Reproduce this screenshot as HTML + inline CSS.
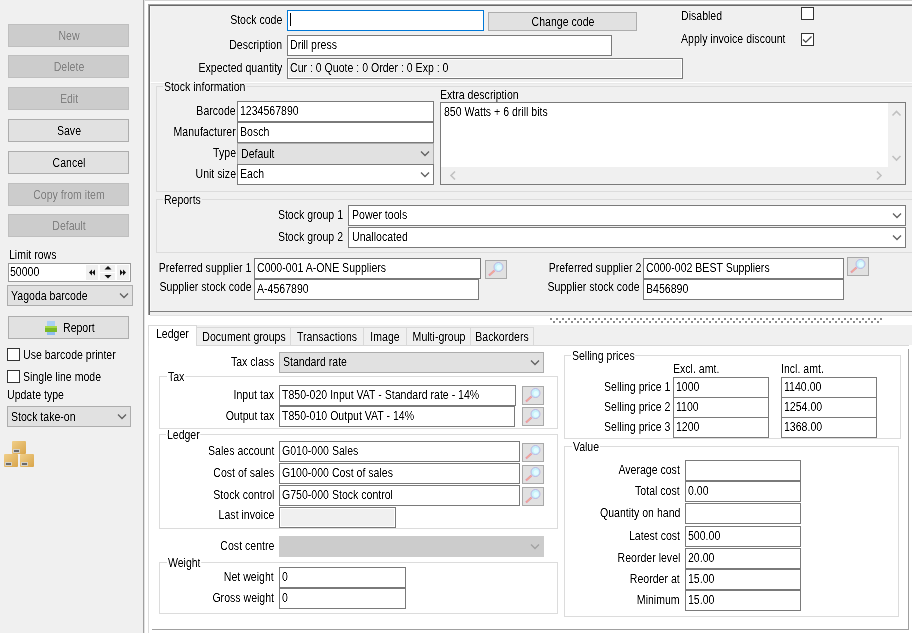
<!DOCTYPE html><html><head><meta charset="utf-8"><style>
html,body{margin:0;padding:0;width:912px;height:633px;overflow:hidden;background:#f0f0f0}
.a{position:absolute}
.t{position:absolute;white-space:nowrap;font-family:"Liberation Sans",sans-serif;font-size:12px;line-height:13px;color:#000;transform:scaleX(0.88)}
</style></head><body>
<div class="a" style="left:8px;top:24px;width:121px;height:23px;border:1px solid #bfbfbf;width:119px;height:21px;background:#cccccc;"></div>
<div class="a" style="left:8px;top:55px;width:121px;height:23px;border:1px solid #bfbfbf;width:119px;height:21px;background:#cccccc;"></div>
<div class="a" style="left:8px;top:87px;width:121px;height:23px;border:1px solid #bfbfbf;width:119px;height:21px;background:#cccccc;"></div>
<div class="a" style="left:8px;top:119px;width:121px;height:23px;border:1px solid #adadad;width:119px;height:21px;background:#e1e1e1;"></div>
<div class="a" style="left:8px;top:151px;width:121px;height:23px;border:1px solid #adadad;width:119px;height:21px;background:#e1e1e1;"></div>
<div class="a" style="left:8px;top:183px;width:121px;height:23px;border:1px solid #bfbfbf;width:119px;height:21px;background:#cccccc;"></div>
<div class="a" style="left:8px;top:214px;width:121px;height:23px;border:1px solid #bfbfbf;width:119px;height:21px;background:#cccccc;"></div>
<div class="a" style="left:8px;top:263px;width:123px;height:19px;border:1px solid #9a9a9a;width:121px;height:17px;background:#fff;"></div>
<div class="a" style="left:86px;top:265px;width:12px;height:15px;background:#f0f0f0;"></div>
<div class="a" style="left:100px;top:265px;width:15px;height:7px;background:#f0f0f0;"></div>
<div class="a" style="left:100px;top:273px;width:15px;height:7px;background:#f0f0f0;"></div>
<div class="a" style="left:117px;top:265px;width:12px;height:15px;background:#f0f0f0;"></div>
<svg class="a" style="left:86px;top:265px" width="43" height="15">
<path d="M3 7.5 L6 4.5 L6 10.5 Z M6 7.5 L9 4.5 L9 10.5 Z" fill="#111"/>
<path d="M18.5 4.5 L22 1 L25.5 4.5 Z" fill="#111"/>
<path d="M18.5 10 L22 13.5 L25.5 10 Z" fill="#111"/>
<path d="M34 4.5 L37 7.5 L34 10.5 Z M37 4.5 L40 7.5 L37 10.5 Z" fill="#111"/>
</svg>
<div class="a" style="left:7px;top:285px;width:126px;height:21px;border:1px solid #adadad;width:124px;height:19px;background:#e1e1e1;"></div>
<svg class="a" style="left:119px;top:292px" width="11" height="7"><path d="M1 1.5 L5 5.5 L9 1.5" fill="none" stroke="#606060" stroke-width="1.3"/></svg>
<div class="a" style="left:8px;top:316px;width:121px;height:23px;border:1px solid #adadad;width:119px;height:21px;background:#e1e1e1;"></div>
<svg class="a" style="left:44px;top:320px" width="15" height="16">
<rect x="3" y="1" width="8" height="6" fill="#a9d0f5"/>
<rect x="0.5" y="6" width="13" height="6" fill="#e8e8e8"/>
<rect x="1" y="6" width="12" height="6" fill="#7ab82a"/>
<rect x="1" y="6" width="12" height="2" fill="#a8d84a"/>
<rect x="3" y="12" width="8" height="3" fill="#8fbdf0"/>
</svg>
<div class="a" style="left:7px;top:348px;width:13px;height:13px;border:1px solid #333333;width:11px;height:11px;background:#fff;"></div>
<div class="a" style="left:7px;top:370px;width:13px;height:13px;border:1px solid #333333;width:11px;height:11px;background:#fff;"></div>
<div class="a" style="left:7px;top:406px;width:124px;height:21px;border:1px solid #adadad;width:122px;height:19px;background:#e1e1e1;"></div>
<svg class="a" style="left:117px;top:413px" width="11" height="7"><path d="M1 1.5 L5 5.5 L9 1.5" fill="none" stroke="#606060" stroke-width="1.3"/></svg>
<svg class="a" style="left:3px;top:440px" width="33" height="29">
<defs><linearGradient id="bx" x1="0" y1="0" x2="1" y2="1"><stop offset="0" stop-color="#f0cf8a"/><stop offset="1" stop-color="#d9a54a"/></linearGradient></defs>
<rect x="9" y="1" width="14" height="13" rx="1" fill="url(#bx)"/>
<rect x="1" y="14" width="14" height="13" rx="1" fill="url(#bx)"/>
<rect x="17" y="14" width="14" height="13" rx="1" fill="url(#bx)"/>
<rect x="10" y="9" width="7" height="4" fill="#d6d0c4"/><rect x="11" y="10" width="5" height="2" fill="#6a6a6a"/>
<rect x="2" y="22" width="7" height="4" fill="#d6d0c4"/><rect x="3" y="23" width="5" height="2" fill="#6a6a6a"/>
<rect x="18" y="22" width="7" height="4" fill="#d6d0c4"/><rect x="19" y="23" width="5" height="2" fill="#6a6a6a"/>
</svg>
<div class="a" style="left:143px;top:0px;width:1px;height:633px;background:#a0a0a0;"></div>
<div class="a" style="left:144px;top:0px;width:768px;height:633px;background:#ffffff;"></div>
<div class="a" style="left:144px;top:0px;width:768px;height:1px;background:#d5d5d5;"></div>
<div class="a" style="left:144px;top:0px;width:1px;height:633px;background:#e3e3e3;"></div>
<div class="a" style="left:148px;top:4px;width:764px;height:311px;background:#f0f0f0;"></div>
<div class="a" style="left:148px;top:4px;width:764px;height:1px;background:#a0a0a0;"></div>
<div class="a" style="left:148px;top:4px;width:1px;height:311px;background:#a0a0a0;"></div>
<div class="a" style="left:149px;top:5px;width:763px;height:1px;background:#696969;"></div>
<div class="a" style="left:149px;top:5px;width:1px;height:310px;background:#696969;"></div>
<div class="a" style="left:150px;top:6px;width:1px;height:305px;background:#f8f8f8;"></div>
<div class="a" style="left:150px;top:82px;width:762px;height:1px;background:#ffffff;"></div>
<div class="a" style="left:151px;top:83px;width:761px;height:1px;background:#e8e8e8;"></div>
<div class="a" style="left:150px;top:311px;width:762px;height:1px;background:#808080;"></div>
<div class="a" style="left:150px;top:315px;width:762px;height:1px;background:#e3e3e3;"></div>
<div class="a" style="left:287px;top:10px;width:197px;height:21px;border:1px solid #0078d7;width:195px;height:19px;background:#fff;"></div>
<div class="a" style="left:290px;top:13px;width:1px;height:13px;background:#000;"></div>
<div class="a" style="left:488px;top:12px;width:149px;height:19px;border:1px solid #adadad;width:147px;height:17px;background:#e1e1e1;"></div>
<div class="a" style="left:287px;top:35px;width:325px;height:21px;border:1px solid #7a7a7a;width:323px;height:19px;background:#fff;"></div>
<div class="a" style="left:287px;top:58px;width:396px;height:21px;border:1px solid #7a7a7a;width:394px;height:19px;background:#f0f0f0;box-shadow:inset 0 0 0 1px #fff;"></div>
<div class="a" style="left:801px;top:7px;width:13px;height:13px;border:1px solid #333333;width:11px;height:11px;background:#fff;"></div>
<div class="a" style="left:801px;top:33px;width:13px;height:13px;border:1px solid #333333;width:11px;height:11px;background:#fff;"></div>
<svg class="a" style="left:801px;top:33px" width="13" height="13"><path d="M2 6.5 L4.8 9.2 L10.5 3.5" fill="none" stroke="#444" stroke-width="1.2"/></svg>
<div class="a" style="left:156px;top:86px;width:760px;height:106px;border:1px solid #dcdcdc;width:758px;height:104px;"></div>
<div class="a" style="left:237px;top:101px;width:197px;height:21px;border:1px solid #7a7a7a;width:195px;height:19px;background:#fff;"></div>
<div class="a" style="left:237px;top:122px;width:197px;height:21px;border:1px solid #7a7a7a;width:195px;height:19px;background:#fff;"></div>
<div class="a" style="left:237px;top:143px;width:197px;height:22px;border:1px solid #adadad;width:195px;height:20px;background:#e1e1e1;"></div>
<svg class="a" style="left:420px;top:150px" width="11" height="7"><path d="M1 1.5 L5 5.5 L9 1.5" fill="none" stroke="#606060" stroke-width="1.3"/></svg>
<div class="a" style="left:237px;top:164px;width:197px;height:21px;border:1px solid #7a7a7a;width:195px;height:19px;background:#fff;"></div>
<svg class="a" style="left:420px;top:171px" width="11" height="7"><path d="M1 1.5 L5 5.5 L9 1.5" fill="none" stroke="#606060" stroke-width="1.3"/></svg>
<div class="a" style="left:440px;top:102px;width:466px;height:83px;border:1px solid #7a7a7a;width:464px;height:81px;background:#fff;"></div>
<div class="a" style="left:888px;top:103px;width:17px;height:65px;background:#f0f0f0;"></div>
<div class="a" style="left:441px;top:167px;width:464px;height:17px;background:#f0f0f0;"></div>
<svg class="a" style="left:890px;top:110px" width="13" height="50"></svg>
<svg class="a" style="left:888px;top:102px" width="17" height="82">
<path d="M4.5 13.5 L8.5 9.5 L12.5 13.5" fill="none" stroke="#c0c0c0" stroke-width="1.6"/>
<path d="M4.5 54 L8.5 58 L12.5 54" fill="none" stroke="#c0c0c0" stroke-width="1.6"/>
</svg>
<svg class="a" style="left:441px;top:167px" width="464" height="17">
<path d="M14 4.5 L10 8.5 L14 12.5" fill="none" stroke="#c0c0c0" stroke-width="1.6"/>
<path d="M436 4.5 L440 8.5 L436 12.5" fill="none" stroke="#c0c0c0" stroke-width="1.6"/>
</svg>
<div class="a" style="left:156px;top:199px;width:760px;height:54px;border:1px solid #dcdcdc;width:758px;height:52px;"></div>
<div class="a" style="left:348px;top:205px;width:558px;height:21px;border:1px solid #7a7a7a;width:556px;height:19px;background:#fff;"></div>
<svg class="a" style="left:892px;top:212px" width="11" height="7"><path d="M1 1.5 L5 5.5 L9 1.5" fill="none" stroke="#606060" stroke-width="1.3"/></svg>
<div class="a" style="left:348px;top:227px;width:558px;height:21px;border:1px solid #7a7a7a;width:556px;height:19px;background:#fff;"></div>
<svg class="a" style="left:892px;top:234px" width="11" height="7"><path d="M1 1.5 L5 5.5 L9 1.5" fill="none" stroke="#606060" stroke-width="1.3"/></svg>
<div class="a" style="left:254px;top:258px;width:227px;height:21px;border:1px solid #7a7a7a;width:225px;height:19px;background:#fff;"></div>
<div class="a" style="left:485px;top:260px;width:22px;height:19px;border:1px solid #a9a9a9;width:20px;height:17px;background:#e1e1e1;"></div>
<svg class="a" style="left:485px;top:260px" width="22" height="19">
<line x1="4" y1="15.5" x2="9.5" y2="10.5" stroke="#e58fb0" stroke-width="2.2"/>
<line x1="4.5" y1="15" x2="9" y2="11" stroke="#f7c27a" stroke-width="0.9"/>
<circle cx="13.5" cy="7" r="4.5" fill="#c8f2fb" stroke="#b4a8e0" stroke-width="0.8"/>
<circle cx="14" cy="7.5" r="2.5" fill="#e4fcff"/>
</svg>
<div class="a" style="left:254px;top:279px;width:225px;height:21px;border:1px solid #7a7a7a;width:223px;height:19px;background:#fff;"></div>
<div class="a" style="left:643px;top:258px;width:201px;height:21px;border:1px solid #7a7a7a;width:199px;height:19px;background:#fff;"></div>
<div class="a" style="left:847px;top:257px;width:22px;height:19px;border:1px solid #a9a9a9;width:20px;height:17px;background:#e1e1e1;"></div>
<svg class="a" style="left:847px;top:257px" width="22" height="19">
<line x1="4" y1="15.5" x2="9.5" y2="10.5" stroke="#e58fb0" stroke-width="2.2"/>
<line x1="4.5" y1="15" x2="9" y2="11" stroke="#f7c27a" stroke-width="0.9"/>
<circle cx="13.5" cy="7" r="4.5" fill="#c8f2fb" stroke="#b4a8e0" stroke-width="0.8"/>
<circle cx="14" cy="7.5" r="2.5" fill="#e4fcff"/>
</svg>
<div class="a" style="left:643px;top:279px;width:201px;height:21px;border:1px solid #7a7a7a;width:199px;height:19px;background:#fff;"></div>
<svg class="a" style="left:550px;top:318px" width="335" height="5" fill="#8a8a8a"><rect x="0" y="0" width="2" height="2"/><rect x="3" y="3" width="2" height="2"/><rect x="6" y="0" width="2" height="2"/><rect x="9" y="3" width="2" height="2"/><rect x="12" y="0" width="2" height="2"/><rect x="15" y="3" width="2" height="2"/><rect x="18" y="0" width="2" height="2"/><rect x="21" y="3" width="2" height="2"/><rect x="24" y="0" width="2" height="2"/><rect x="27" y="3" width="2" height="2"/><rect x="30" y="0" width="2" height="2"/><rect x="33" y="3" width="2" height="2"/><rect x="36" y="0" width="2" height="2"/><rect x="39" y="3" width="2" height="2"/><rect x="42" y="0" width="2" height="2"/><rect x="45" y="3" width="2" height="2"/><rect x="48" y="0" width="2" height="2"/><rect x="51" y="3" width="2" height="2"/><rect x="54" y="0" width="2" height="2"/><rect x="57" y="3" width="2" height="2"/><rect x="60" y="0" width="2" height="2"/><rect x="63" y="3" width="2" height="2"/><rect x="66" y="0" width="2" height="2"/><rect x="69" y="3" width="2" height="2"/><rect x="72" y="0" width="2" height="2"/><rect x="75" y="3" width="2" height="2"/><rect x="78" y="0" width="2" height="2"/><rect x="81" y="3" width="2" height="2"/><rect x="84" y="0" width="2" height="2"/><rect x="87" y="3" width="2" height="2"/><rect x="90" y="0" width="2" height="2"/><rect x="93" y="3" width="2" height="2"/><rect x="96" y="0" width="2" height="2"/><rect x="99" y="3" width="2" height="2"/><rect x="102" y="0" width="2" height="2"/><rect x="105" y="3" width="2" height="2"/><rect x="108" y="0" width="2" height="2"/><rect x="111" y="3" width="2" height="2"/><rect x="114" y="0" width="2" height="2"/><rect x="117" y="3" width="2" height="2"/><rect x="120" y="0" width="2" height="2"/><rect x="123" y="3" width="2" height="2"/><rect x="126" y="0" width="2" height="2"/><rect x="129" y="3" width="2" height="2"/><rect x="132" y="0" width="2" height="2"/><rect x="135" y="3" width="2" height="2"/><rect x="138" y="0" width="2" height="2"/><rect x="141" y="3" width="2" height="2"/><rect x="144" y="0" width="2" height="2"/><rect x="147" y="3" width="2" height="2"/><rect x="150" y="0" width="2" height="2"/><rect x="153" y="3" width="2" height="2"/><rect x="156" y="0" width="2" height="2"/><rect x="159" y="3" width="2" height="2"/><rect x="162" y="0" width="2" height="2"/><rect x="165" y="3" width="2" height="2"/><rect x="168" y="0" width="2" height="2"/><rect x="171" y="3" width="2" height="2"/><rect x="174" y="0" width="2" height="2"/><rect x="177" y="3" width="2" height="2"/><rect x="180" y="0" width="2" height="2"/><rect x="183" y="3" width="2" height="2"/><rect x="186" y="0" width="2" height="2"/><rect x="189" y="3" width="2" height="2"/><rect x="192" y="0" width="2" height="2"/><rect x="195" y="3" width="2" height="2"/><rect x="198" y="0" width="2" height="2"/><rect x="201" y="3" width="2" height="2"/><rect x="204" y="0" width="2" height="2"/><rect x="207" y="3" width="2" height="2"/><rect x="210" y="0" width="2" height="2"/><rect x="213" y="3" width="2" height="2"/><rect x="216" y="0" width="2" height="2"/><rect x="219" y="3" width="2" height="2"/><rect x="222" y="0" width="2" height="2"/><rect x="225" y="3" width="2" height="2"/><rect x="228" y="0" width="2" height="2"/><rect x="231" y="3" width="2" height="2"/><rect x="234" y="0" width="2" height="2"/><rect x="237" y="3" width="2" height="2"/><rect x="240" y="0" width="2" height="2"/><rect x="243" y="3" width="2" height="2"/><rect x="246" y="0" width="2" height="2"/><rect x="249" y="3" width="2" height="2"/><rect x="252" y="0" width="2" height="2"/><rect x="255" y="3" width="2" height="2"/><rect x="258" y="0" width="2" height="2"/><rect x="261" y="3" width="2" height="2"/><rect x="264" y="0" width="2" height="2"/><rect x="267" y="3" width="2" height="2"/><rect x="270" y="0" width="2" height="2"/><rect x="273" y="3" width="2" height="2"/><rect x="276" y="0" width="2" height="2"/><rect x="279" y="3" width="2" height="2"/><rect x="282" y="0" width="2" height="2"/><rect x="285" y="3" width="2" height="2"/><rect x="288" y="0" width="2" height="2"/><rect x="291" y="3" width="2" height="2"/><rect x="294" y="0" width="2" height="2"/><rect x="297" y="3" width="2" height="2"/><rect x="300" y="0" width="2" height="2"/><rect x="303" y="3" width="2" height="2"/><rect x="306" y="0" width="2" height="2"/><rect x="309" y="3" width="2" height="2"/><rect x="312" y="0" width="2" height="2"/><rect x="315" y="3" width="2" height="2"/><rect x="318" y="0" width="2" height="2"/><rect x="321" y="3" width="2" height="2"/><rect x="324" y="0" width="2" height="2"/><rect x="327" y="3" width="2" height="2"/><rect x="330" y="0" width="2" height="2"/></svg>
<div class="a" style="left:148px;top:325px;width:764px;height:21px;background:#f0f0f0;"></div>
<div class="a" style="left:148px;top:345px;width:764px;height:288px;background:#ffffff;"></div>
<div class="a" style="left:148px;top:345px;width:761px;height:1px;background:#d9d9d9;"></div>
<div class="a" style="left:148px;top:345px;width:1px;height:288px;background:#dcdcdc;"></div>
<div class="a" style="left:908px;top:349px;width:1px;height:281px;background:#a0a0a0;"></div>
<div class="a" style="left:152px;top:629px;width:757px;height:1px;background:#a0a0a0;"></div>
<div class="a" style="left:196px;top:327px;width:95px;height:19px;border:1px solid #d9d9d9;width:93px;height:17px;background:#f0f0f0;"></div>
<div class="a" style="left:290px;top:327px;width:74px;height:19px;border:1px solid #d9d9d9;width:72px;height:17px;background:#f0f0f0;"></div>
<div class="a" style="left:363px;top:327px;width:44px;height:19px;border:1px solid #d9d9d9;width:42px;height:17px;background:#f0f0f0;"></div>
<div class="a" style="left:406px;top:327px;width:65px;height:19px;border:1px solid #d9d9d9;width:63px;height:17px;background:#f0f0f0;"></div>
<div class="a" style="left:470px;top:327px;width:64px;height:19px;border:1px solid #d9d9d9;width:62px;height:17px;background:#f0f0f0;"></div>
<div class="a" style="left:148px;top:325px;width:49px;height:21px;border:1px solid #d9d9d9;width:47px;height:19px;background:#ffffff;"></div>
<div class="a" style="left:149px;top:344px;width:47px;height:3px;background:#ffffff;"></div>
<div class="a" style="left:279px;top:352px;width:265px;height:21px;border:1px solid #adadad;width:263px;height:19px;background:#e1e1e1;"></div>
<svg class="a" style="left:530px;top:359px" width="11" height="7"><path d="M1 1.5 L5 5.5 L9 1.5" fill="none" stroke="#606060" stroke-width="1.3"/></svg>
<div class="a" style="left:159px;top:376px;width:399px;height:53px;border:1px solid #dcdcdc;width:397px;height:51px;"></div>
<div class="a" style="left:279px;top:385px;width:237px;height:21px;border:1px solid #7a7a7a;width:235px;height:19px;background:#fff;"></div>
<div class="a" style="left:522px;top:386px;width:22px;height:19px;border:1px solid #a9a9a9;width:20px;height:17px;background:#e1e1e1;"></div>
<svg class="a" style="left:522px;top:386px" width="22" height="19">
<line x1="4" y1="15.5" x2="9.5" y2="10.5" stroke="#e58fb0" stroke-width="2.2"/>
<line x1="4.5" y1="15" x2="9" y2="11" stroke="#f7c27a" stroke-width="0.9"/>
<circle cx="13.5" cy="7" r="4.5" fill="#c8f2fb" stroke="#b4a8e0" stroke-width="0.8"/>
<circle cx="14" cy="7.5" r="2.5" fill="#e4fcff"/>
</svg>
<div class="a" style="left:279px;top:406px;width:236px;height:21px;border:1px solid #7a7a7a;width:234px;height:19px;background:#fff;"></div>
<div class="a" style="left:522px;top:407px;width:22px;height:19px;border:1px solid #a9a9a9;width:20px;height:17px;background:#e1e1e1;"></div>
<svg class="a" style="left:522px;top:407px" width="22" height="19">
<line x1="4" y1="15.5" x2="9.5" y2="10.5" stroke="#e58fb0" stroke-width="2.2"/>
<line x1="4.5" y1="15" x2="9" y2="11" stroke="#f7c27a" stroke-width="0.9"/>
<circle cx="13.5" cy="7" r="4.5" fill="#c8f2fb" stroke="#b4a8e0" stroke-width="0.8"/>
<circle cx="14" cy="7.5" r="2.5" fill="#e4fcff"/>
</svg>
<div class="a" style="left:159px;top:434px;width:399px;height:95px;border:1px solid #dcdcdc;width:397px;height:93px;"></div>
<div class="a" style="left:279px;top:441px;width:241px;height:21px;border:1px solid #7a7a7a;width:239px;height:19px;background:#fff;"></div>
<div class="a" style="left:522px;top:443px;width:22px;height:19px;border:1px solid #a9a9a9;width:20px;height:17px;background:#e1e1e1;"></div>
<svg class="a" style="left:522px;top:443px" width="22" height="19">
<line x1="4" y1="15.5" x2="9.5" y2="10.5" stroke="#e58fb0" stroke-width="2.2"/>
<line x1="4.5" y1="15" x2="9" y2="11" stroke="#f7c27a" stroke-width="0.9"/>
<circle cx="13.5" cy="7" r="4.5" fill="#c8f2fb" stroke="#b4a8e0" stroke-width="0.8"/>
<circle cx="14" cy="7.5" r="2.5" fill="#e4fcff"/>
</svg>
<div class="a" style="left:279px;top:463px;width:241px;height:21px;border:1px solid #7a7a7a;width:239px;height:19px;background:#fff;"></div>
<div class="a" style="left:522px;top:465px;width:22px;height:19px;border:1px solid #a9a9a9;width:20px;height:17px;background:#e1e1e1;"></div>
<svg class="a" style="left:522px;top:465px" width="22" height="19">
<line x1="4" y1="15.5" x2="9.5" y2="10.5" stroke="#e58fb0" stroke-width="2.2"/>
<line x1="4.5" y1="15" x2="9" y2="11" stroke="#f7c27a" stroke-width="0.9"/>
<circle cx="13.5" cy="7" r="4.5" fill="#c8f2fb" stroke="#b4a8e0" stroke-width="0.8"/>
<circle cx="14" cy="7.5" r="2.5" fill="#e4fcff"/>
</svg>
<div class="a" style="left:279px;top:485px;width:241px;height:21px;border:1px solid #7a7a7a;width:239px;height:19px;background:#fff;"></div>
<div class="a" style="left:522px;top:487px;width:22px;height:19px;border:1px solid #a9a9a9;width:20px;height:17px;background:#e1e1e1;"></div>
<svg class="a" style="left:522px;top:487px" width="22" height="19">
<line x1="4" y1="15.5" x2="9.5" y2="10.5" stroke="#e58fb0" stroke-width="2.2"/>
<line x1="4.5" y1="15" x2="9" y2="11" stroke="#f7c27a" stroke-width="0.9"/>
<circle cx="13.5" cy="7" r="4.5" fill="#c8f2fb" stroke="#b4a8e0" stroke-width="0.8"/>
<circle cx="14" cy="7.5" r="2.5" fill="#e4fcff"/>
</svg>
<div class="a" style="left:279px;top:507px;width:117px;height:21px;border:1px solid #7a7a7a;width:115px;height:19px;background:#f0f0f0;box-shadow:inset 0 0 0 1px #fff;"></div>
<div class="a" style="left:279px;top:536px;width:265px;height:21px;border:1px solid #cccccc;width:263px;height:19px;background:#cccccc;"></div>
<svg class="a" style="left:530px;top:543px" width="11" height="7"><path d="M1 1.5 L5 5.5 L9 1.5" fill="none" stroke="#a0a0a0" stroke-width="1.3"/></svg>
<div class="a" style="left:159px;top:562px;width:399px;height:52px;border:1px solid #dcdcdc;width:397px;height:50px;"></div>
<div class="a" style="left:279px;top:567px;width:127px;height:21px;border:1px solid #7a7a7a;width:125px;height:19px;background:#fff;"></div>
<div class="a" style="left:279px;top:588px;width:127px;height:21px;border:1px solid #7a7a7a;width:125px;height:19px;background:#fff;"></div>
<div class="a" style="left:564px;top:355px;width:337px;height:84px;border:1px solid #dcdcdc;width:335px;height:82px;"></div>
<div class="a" style="left:673px;top:377px;width:96px;height:21px;border:1px solid #7a7a7a;width:94px;height:19px;background:#fff;"></div>
<div class="a" style="left:781px;top:377px;width:96px;height:21px;border:1px solid #7a7a7a;width:94px;height:19px;background:#fff;"></div>
<div class="a" style="left:673px;top:397px;width:96px;height:21px;border:1px solid #7a7a7a;width:94px;height:19px;background:#fff;"></div>
<div class="a" style="left:781px;top:397px;width:96px;height:21px;border:1px solid #7a7a7a;width:94px;height:19px;background:#fff;"></div>
<div class="a" style="left:673px;top:417px;width:96px;height:21px;border:1px solid #7a7a7a;width:94px;height:19px;background:#fff;"></div>
<div class="a" style="left:781px;top:417px;width:96px;height:21px;border:1px solid #7a7a7a;width:94px;height:19px;background:#fff;"></div>
<div class="a" style="left:564px;top:446px;width:335px;height:171px;border:1px solid #dcdcdc;width:333px;height:169px;"></div>
<div class="a" style="left:685px;top:460px;width:116px;height:21px;border:1px solid #7a7a7a;width:114px;height:19px;background:#fff;"></div>
<div class="a" style="left:685px;top:481px;width:116px;height:21px;border:1px solid #7a7a7a;width:114px;height:19px;background:#fff;"></div>
<div class="a" style="left:685px;top:503px;width:116px;height:21px;border:1px solid #7a7a7a;width:114px;height:19px;background:#fff;"></div>
<div class="a" style="left:685px;top:526px;width:116px;height:21px;border:1px solid #7a7a7a;width:114px;height:19px;background:#fff;"></div>
<div class="a" style="left:685px;top:548px;width:116px;height:21px;border:1px solid #7a7a7a;width:114px;height:19px;background:#fff;"></div>
<div class="a" style="left:685px;top:569px;width:116px;height:21px;border:1px solid #7a7a7a;width:114px;height:19px;background:#fff;"></div>
<div class="a" style="left:685px;top:590px;width:116px;height:21px;border:1px solid #7a7a7a;width:114px;height:19px;background:#fff;"></div>
<svg width="0" height="0" style="position:absolute"><filter id="crisp" x="0" y="0" width="100%" height="100%"><feComponentTransfer><feFuncA type="linear" slope="1.6" intercept="-0.3"/></feComponentTransfer></filter></svg>
<div class="a" style="left:0;top:0;width:912px;height:633px;filter:url(#crisp)">
<div class="t" style="left:-81.5px;width:300px;top:30px;color:#838383;text-align:center;transform-origin:50% 0;">New</div>
<div class="t" style="left:-81.5px;width:300px;top:61px;color:#838383;text-align:center;transform-origin:50% 0;">Delete</div>
<div class="t" style="left:-81.5px;width:300px;top:93px;color:#838383;text-align:center;transform-origin:50% 0;">Edit</div>
<div class="t" style="left:-81.5px;width:300px;top:125px;color:#000;text-align:center;transform-origin:50% 0;">Save</div>
<div class="t" style="left:-81.5px;width:300px;top:157px;color:#000;text-align:center;transform-origin:50% 0;">Cancel</div>
<div class="t" style="left:-81.5px;width:300px;top:189px;color:#838383;text-align:center;transform-origin:50% 0;">Copy from item</div>
<div class="t" style="left:-81.5px;width:300px;top:220px;color:#838383;text-align:center;transform-origin:50% 0;">Default</div>
<div class="t" style="left:9px;top:249px;color:#000;transform-origin:0 0;">Limit rows</div>
<div class="t" style="left:10px;top:266px;color:#000;transform-origin:0 0;">50000</div>
<div class="t" style="left:11px;top:290px;color:#000;transform-origin:0 0;">Yagoda barcode</div>
<div class="t" style="left:-81.5px;width:300px;top:322px;color:#000;text-align:center;transform-origin:50% 0;"></div>
<div class="t" style="left:63px;top:322px;color:#000;transform-origin:0 0;">Report</div>
<div class="t" style="left:23px;top:349px;color:#000;transform-origin:0 0;">Use barcode printer</div>
<div class="t" style="left:23px;top:371px;color:#000;transform-origin:0 0;">Single line mode</div>
<div class="t" style="left:7px;top:389px;color:#000;transform-origin:0 0;">Update type</div>
<div class="t" style="left:11px;top:411px;color:#000;transform-origin:0 0;">Stock take-on</div>
<div class="t" style="right:630px;top:14px;color:#000;text-align:right;transform-origin:100% 0;">Stock code</div>
<div class="t" style="left:412.5px;width:300px;top:16px;color:#000;text-align:center;transform-origin:50% 0;">Change code</div>
<div class="t" style="right:630px;top:39px;color:#000;text-align:right;transform-origin:100% 0;">Description</div>
<div class="t" style="left:290px;top:39px;color:#000;transform-origin:0 0;">Drill press</div>
<div class="t" style="right:630px;top:62px;color:#000;text-align:right;transform-origin:100% 0;">Expected quantity</div>
<div class="t" style="left:290px;top:62px;color:#000;transform-origin:0 0;">Cur : 0 Quote : 0 Order : 0 Exp : 0</div>
<div class="t" style="left:681px;top:10px;color:#000;transform-origin:0 0;">Disabled</div>
<div class="t" style="left:681px;top:33px;color:#000;transform-origin:0 0;">Apply invoice discount</div>
<div class="t" style="left:163px;top:81px;background:linear-gradient(transparent 4px,#f0f0f0 4px,#f0f0f0 7px,transparent 7px);padding:0 1px;transform-origin:0 0">Stock information</div>
<div class="t" style="right:676px;top:105px;color:#000;text-align:right;transform-origin:100% 0;">Barcode</div>
<div class="t" style="left:240px;top:105px;color:#000;transform-origin:0 0;">1234567890</div>
<div class="t" style="right:676px;top:126px;color:#000;text-align:right;transform-origin:100% 0;">Manufacturer</div>
<div class="t" style="left:240px;top:126px;color:#000;transform-origin:0 0;">Bosch</div>
<div class="t" style="right:676px;top:147px;color:#000;text-align:right;transform-origin:100% 0;">Type</div>
<div class="t" style="left:241px;top:148px;color:#000;transform-origin:0 0;">Default</div>
<div class="t" style="right:676px;top:168px;color:#000;text-align:right;transform-origin:100% 0;">Unit size</div>
<div class="t" style="left:240px;top:168px;color:#000;transform-origin:0 0;">Each</div>
<div class="t" style="left:440px;top:89px;color:#000;transform-origin:0 0;">Extra description</div>
<div class="t" style="left:444px;top:106px;color:#000;transform-origin:0 0;">850 Watts + 6 drill bits</div>
<div class="t" style="left:163px;top:194px;background:linear-gradient(transparent 4px,#f0f0f0 4px,#f0f0f0 7px,transparent 7px);padding:0 1px;transform-origin:0 0">Reports</div>
<div class="t" style="right:569px;top:209px;color:#000;text-align:right;transform-origin:100% 0;">Stock group 1</div>
<div class="t" style="left:352px;top:209px;color:#000;transform-origin:0 0;">Power tools</div>
<div class="t" style="right:569px;top:231px;color:#000;text-align:right;transform-origin:100% 0;">Stock group 2</div>
<div class="t" style="left:352px;top:231px;color:#000;transform-origin:0 0;">Unallocated</div>
<div class="t" style="right:661px;top:262px;color:#000;text-align:right;transform-origin:100% 0;">Preferred supplier 1</div>
<div class="t" style="left:257px;top:262px;color:#000;transform-origin:0 0;">C000-001 A-ONE Suppliers</div>
<div class="t" style="right:660px;top:281px;color:#000;text-align:right;transform-origin:100% 0;">Supplier stock code</div>
<div class="t" style="left:257px;top:283px;color:#000;transform-origin:0 0;">A-4567890</div>
<div class="t" style="right:271px;top:262px;color:#000;text-align:right;transform-origin:100% 0;">Preferred supplier 2</div>
<div class="t" style="left:646px;top:262px;color:#000;transform-origin:0 0;">C000-002 BEST Suppliers</div>
<div class="t" style="right:272px;top:281px;color:#000;text-align:right;transform-origin:100% 0;">Supplier stock code</div>
<div class="t" style="left:646px;top:283px;color:#000;transform-origin:0 0;">B456890</div>
<div class="t" style="left:93.5px;width:300px;top:331px;color:#000;text-align:center;transform-origin:50% 0;">Document groups</div>
<div class="t" style="left:177.0px;width:300px;top:331px;color:#000;text-align:center;transform-origin:50% 0;">Transactions</div>
<div class="t" style="left:235.0px;width:300px;top:331px;color:#000;text-align:center;transform-origin:50% 0;">Image</div>
<div class="t" style="left:288.5px;width:300px;top:331px;color:#000;text-align:center;transform-origin:50% 0;">Multi-group</div>
<div class="t" style="left:352.0px;width:300px;top:331px;color:#000;text-align:center;transform-origin:50% 0;">Backorders</div>
<div class="t" style="left:156px;top:328px;color:#000;transform-origin:0 0;">Ledger</div>
<div class="t" style="right:638px;top:356px;color:#000;text-align:right;transform-origin:100% 0;">Tax class</div>
<div class="t" style="left:283px;top:356px;color:#000;transform-origin:0 0;">Standard rate</div>
<div class="t" style="left:167px;top:371px;background:linear-gradient(transparent 4px,#fff 4px,#fff 7px,transparent 7px);padding:0 1px;transform-origin:0 0">Tax</div>
<div class="t" style="right:638px;top:389px;color:#000;text-align:right;transform-origin:100% 0;">Input tax</div>
<div class="t" style="left:282px;top:389px;color:#000;transform-origin:0 0;">T850-020 Input VAT - Standard rate - 14%</div>
<div class="t" style="right:638px;top:410px;color:#000;text-align:right;transform-origin:100% 0;">Output tax</div>
<div class="t" style="left:282px;top:410px;color:#000;transform-origin:0 0;">T850-010 Output VAT - 14%</div>
<div class="t" style="left:166px;top:429px;background:linear-gradient(transparent 4px,#fff 4px,#fff 7px,transparent 7px);padding:0 1px;transform-origin:0 0">Ledger</div>
<div class="t" style="right:638px;top:445px;color:#000;text-align:right;transform-origin:100% 0;">Sales account</div>
<div class="t" style="left:282px;top:445px;color:#000;transform-origin:0 0;">G010-000 Sales</div>
<div class="t" style="right:638px;top:467px;color:#000;text-align:right;transform-origin:100% 0;">Cost of sales</div>
<div class="t" style="left:282px;top:467px;color:#000;transform-origin:0 0;">G100-000 Cost of sales</div>
<div class="t" style="right:638px;top:489px;color:#000;text-align:right;transform-origin:100% 0;">Stock control</div>
<div class="t" style="left:282px;top:489px;color:#000;transform-origin:0 0;">G750-000 Stock control</div>
<div class="t" style="right:638px;top:509px;color:#000;text-align:right;transform-origin:100% 0;">Last invoice</div>
<div class="t" style="right:638px;top:540px;color:#000;text-align:right;transform-origin:100% 0;">Cost centre</div>
<div class="t" style="left:167px;top:557px;background:linear-gradient(transparent 4px,#fff 4px,#fff 7px,transparent 7px);padding:0 1px;transform-origin:0 0">Weight</div>
<div class="t" style="right:638px;top:571px;color:#000;text-align:right;transform-origin:100% 0;">Net weight</div>
<div class="t" style="left:282px;top:571px;color:#000;transform-origin:0 0;">0</div>
<div class="t" style="right:638px;top:592px;color:#000;text-align:right;transform-origin:100% 0;">Gross weight</div>
<div class="t" style="left:282px;top:592px;color:#000;transform-origin:0 0;">0</div>
<div class="t" style="left:571px;top:350px;background:linear-gradient(transparent 4px,#fff 4px,#fff 7px,transparent 7px);padding:0 1px;transform-origin:0 0">Selling prices</div>
<div class="t" style="left:673px;top:363px;color:#000;transform-origin:0 0;">Excl. amt.</div>
<div class="t" style="left:781px;top:363px;color:#000;transform-origin:0 0;">Incl. amt.</div>
<div class="t" style="right:242px;top:381px;color:#000;text-align:right;transform-origin:100% 0;">Selling price 1</div>
<div class="t" style="left:676px;top:381px;color:#000;transform-origin:0 0;">1000</div>
<div class="t" style="left:784px;top:381px;color:#000;transform-origin:0 0;">1140.00</div>
<div class="t" style="right:242px;top:401px;color:#000;text-align:right;transform-origin:100% 0;">Selling price 2</div>
<div class="t" style="left:676px;top:401px;color:#000;transform-origin:0 0;">1100</div>
<div class="t" style="left:784px;top:401px;color:#000;transform-origin:0 0;">1254.00</div>
<div class="t" style="right:242px;top:421px;color:#000;text-align:right;transform-origin:100% 0;">Selling price 3</div>
<div class="t" style="left:676px;top:421px;color:#000;transform-origin:0 0;">1200</div>
<div class="t" style="left:784px;top:421px;color:#000;transform-origin:0 0;">1368.00</div>
<div class="t" style="left:572px;top:441px;background:linear-gradient(transparent 4px,#fff 4px,#fff 7px,transparent 7px);padding:0 1px;transform-origin:0 0">Value</div>
<div class="t" style="right:232px;top:464px;color:#000;text-align:right;transform-origin:100% 0;">Average cost</div>
<div class="t" style="right:232px;top:485px;color:#000;text-align:right;transform-origin:100% 0;">Total cost</div>
<div class="t" style="left:688px;top:485px;color:#000;transform-origin:0 0;">0.00</div>
<div class="t" style="right:232px;top:507px;color:#000;text-align:right;transform-origin:100% 0;">Quantity on hand</div>
<div class="t" style="right:232px;top:530px;color:#000;text-align:right;transform-origin:100% 0;">Latest cost</div>
<div class="t" style="left:688px;top:530px;color:#000;transform-origin:0 0;">500.00</div>
<div class="t" style="right:232px;top:552px;color:#000;text-align:right;transform-origin:100% 0;">Reorder level</div>
<div class="t" style="left:688px;top:552px;color:#000;transform-origin:0 0;">20.00</div>
<div class="t" style="right:232px;top:573px;color:#000;text-align:right;transform-origin:100% 0;">Reorder at</div>
<div class="t" style="left:688px;top:573px;color:#000;transform-origin:0 0;">15.00</div>
<div class="t" style="right:232px;top:594px;color:#000;text-align:right;transform-origin:100% 0;">Minimum</div>
<div class="t" style="left:688px;top:594px;color:#000;transform-origin:0 0;">15.00</div>
</div>
</body></html>
